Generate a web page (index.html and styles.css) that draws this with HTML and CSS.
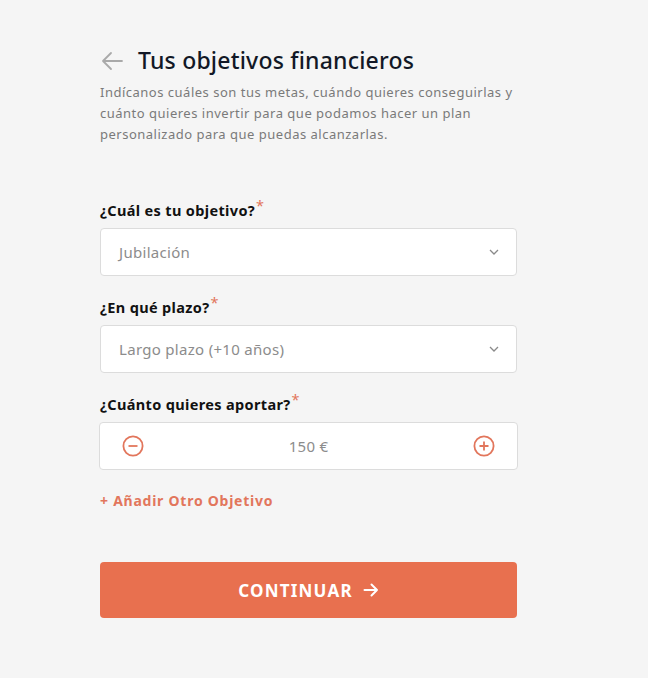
FILE: index.html
```html
<!DOCTYPE html>
<html lang="es">
<head>
<meta charset="utf-8">
<title>Tus objetivos financieros</title>
<link rel="stylesheet" href="styles.css">
</head>
<body>
<main class="page">
  <header class="head">
    <div class="title-row">
      <svg class="back" width="24" height="20" viewBox="0 0 24 20" fill="none" stroke="#a9a9a9" stroke-width="1.8" stroke-linecap="round" stroke-linejoin="round"><path d="M22 10H3M11 2L3 10l8 8"/></svg>
      <h1 class="title">Tus objetivos financieros</h1>
    </div>
    <p class="intro">Indícanos cuáles son tus metas, cuándo quieres conseguirlas y cuánto quieres invertir para que podamos hacer un plan personalizado para que puedas alcanzarlas.</p>
  </header>

  <form class="form">
    <div class="field">
      <label class="label">¿Cuál es tu objetivo?<span class="req">*</span></label>
      <div class="select"><span class="value">Jubilación</span>
        <svg width="10" height="6" viewBox="0 0 10 6" fill="none" stroke="#8a8a8a" stroke-width="1.3"><path d="M1 1l4 4 4-4"/></svg>
      </div>
    </div>
    <div class="field">
      <label class="label">¿En qué plazo?<span class="req">*</span></label>
      <div class="select"><span class="value">Largo plazo (+10 años)</span>
        <svg width="10" height="6" viewBox="0 0 10 6" fill="none" stroke="#8a8a8a" stroke-width="1.3"><path d="M1 1l4 4 4-4"/></svg>
      </div>
    </div>
    <div class="field">
      <label class="label">¿Cuánto quieres aportar?<span class="req">*</span></label>
      <div class="stepper">
        <svg width="22" height="22" viewBox="0 0 22 22" fill="none" stroke="#e2765c" stroke-width="1.8"><circle cx="11" cy="11" r="9.6"/><path d="M6.5 11h9"/></svg>
        <span class="amount">150 €</span>
        <svg width="22" height="22" viewBox="0 0 22 22" fill="none" stroke="#e2765c" stroke-width="1.8"><circle cx="11" cy="11" r="9.6"/><path d="M6.5 11h9M11 6.5v9"/></svg>
      </div>
    </div>
    <a class="add" href="#">+ Añadir Otro Objetivo</a>
    <button class="cta" type="button">CONTINUAR
      <svg width="16" height="14" viewBox="0 0 16 14" fill="none" stroke="#fff" stroke-width="2" stroke-linecap="round" stroke-linejoin="round"><path d="M1.5 7h12.5M8.5 1.5L14 7l-5.5 5.5"/></svg>
    </button>
  </form>
</main>
</body>
</html>
```

FILE: styles.css
```css
html, body {
  margin: 0;
  padding: 0;
  background: #f5f5f5;
}
body {
  font-family: "Noto Sans", "Open Sans", Arial, sans-serif;
  color: #111;
  height: 678px;
}
.page {
  width: 417px;
  margin-left: 100px;
  padding-top: 44px;
}
.title-row {
  display: flex;
  align-items: center;
  gap: 14px;
}
.back {
  display: block;
  margin-top: 2px;
}
.title {
  margin: 0;
  font-size: 23px;
  font-weight: 500;
  line-height: 32px;
  color: #121826;
  letter-spacing: 0.2px;
}
.intro {
  margin: 6px 0 0;
  font-size: 13px;
  line-height: 21px;
  color: #7a7a7a;
  letter-spacing: 0.5px;
}
.form {
  margin-top: 56px;
  display: flex;
  flex-direction: column;
}
.field {
  display: flex;
  flex-direction: column;
  margin-bottom: 22px;
}
.label {
  font-size: 14.5px;
  font-weight: 700;
  line-height: 18px;
  color: #111;
  margin-bottom: 9px;
  letter-spacing: 0.35px;
}
.req {
  color: #e2765c;
  font-weight: 400;
  position: relative;
  top: -5px;
  margin-left: 1px;
}
.select, .stepper {
  height: 48px;
  box-sizing: border-box;
  background: #fff;
  border: 1px solid #dcdcdc;
  border-radius: 4px;
  display: flex;
  align-items: center;
}
.select {
  justify-content: space-between;
  padding: 0 17px 0 18px;
  font-size: 15px;
  color: #8c8c8c;
}
.value {
  letter-spacing: 0.3px;
}
.stepper {
  justify-content: space-between;
  padding: 0 22px;
  margin-left: -1px;
  margin-right: -1px;
}
.stepper svg {
  display: block;
}
.amount {
  font-size: 15px;
  color: #8c8c8c;
  letter-spacing: 0.3px;
}
.add {
  font-size: 14px;
  font-weight: 700;
  color: #e2765c;
  text-decoration: none;
  letter-spacing: 0.75px;
  line-height: 18px;
}
.cta {
  margin-top: 52px;
  height: 56px;
  width: 100%;
  background: #e8704f;
  border: none;
  border-radius: 4px;
  color: #fff;
  font-family: inherit;
  font-size: 17px;
  font-weight: 700;
  letter-spacing: 1.2px;
  display: flex;
  align-items: center;
  justify-content: center;
  gap: 10px;
  padding: 0;
}
```
